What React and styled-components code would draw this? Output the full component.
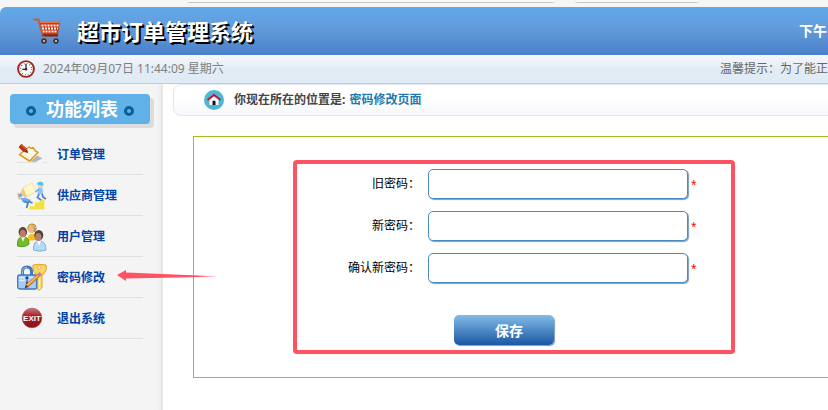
import React, { useState } from "react";
import styled, { createGlobalStyle } from "styled-components";

const fields = [
  { id: "oldpassword", label: "旧密码：" },
  { id: "newpassword", label: "新密码：" },
  { id: "rnewpassword", label: "确认新密码：" },
];

const menu = [
  { text: "订单管理", icon: <OrderIcon /> },
  { text: "供应商管理", icon: <SupplierIcon /> },
  { text: "用户管理", icon: <UsersIcon /> },
  { text: "密码修改", icon: <PasswordIcon />, marked: true },
  { text: "退出系统", icon: <ExitIcon /> },
];

function App() {
  const [values, setValues] = useState({});

  return (
    <Page>
      <GlobalStyle />
      <TabStrip>
        <TabEdge $width="368px" />
        <TabEdge $width="124px" />
      </TabStrip>
      <Header>
        <CartIcon />
        <Title>超市订单管理系统</Title>
        <Greeting>下午</Greeting>
      </Header>
      <TimeBar>
        <ClockIcon />
        <span>2024年09月07日 11:44:09 星期六</span>
        <Tip>温馨提示：为了能正</Tip>
      </TimeBar>
      <Body>
        <Sidebar>
          <MenuTitle>
            <Ring />
            <span>功能列表</span>
            <Ring />
          </MenuTitle>
          <nav>
            <Menu>
              {menu.map((item) => (
                <MenuItem key={item.text}>
                  <MenuLink href="#">
                    {item.icon}
                    {item.text}
                  </MenuLink>
                  {item.marked && <Arrow />}
                </MenuItem>
              ))}
            </Menu>
          </nav>
        </Sidebar>
        <Main>
          <Location>
            <HomeIcon />
            <strong>你现在所在的位置是:</strong>
            <Current>密码修改页面</Current>
          </Location>
          <Panel>
            <Form onSubmit={(e) => e.preventDefault()}>
              {fields.map((f) => (
                <Row key={f.id}>
                  <Label htmlFor={f.id}>{f.label}</Label>
                  <Input
                    id={f.id}
                    type="password"
                    value={values[f.id] || ""}
                    onChange={(e) => setValues({ ...values, [f.id]: e.target.value })}
                  />
                  <Required>*</Required>
                </Row>
              ))}
              <SaveButton type="submit">保存</SaveButton>
            </Form>
          </Panel>
        </Main>
      </Body>
    </Page>
  );
}

export default App;

function CartIcon() {
  return (
    <svg width="28" height="28" viewBox="0 0 28 28" fill="none" aria-hidden="true">
      <path d="M6 4H27L25 18H9.5Z" fill="#c5391a" />
      <path d="M6.5 5H26.5" stroke="#ee7342" strokeWidth="2" />
      <path d="M8.5 8.5H25.5M9 11.5H25M9.5 14.5H24.5" stroke="#fff0e2" strokeWidth="2" strokeDasharray="2 1" />
      <path d="M1.5 2.5H5.5L9.5 18.5" stroke="#b5614a" strokeWidth="2" strokeLinecap="round" />
      <path d="M9.5 18.5H25" stroke="#8e1d08" strokeWidth="2" />
      <path d="M11 19L9 22.5H23" stroke="#8b8890" strokeWidth="1.4" />
      <circle cx="11" cy="24" r="2.8" fill="#3b3538" />
      <circle cx="11" cy="24" r="1.1" fill="#d0d0d0" />
      <circle cx="23" cy="24" r="2.8" fill="#3b3538" />
      <circle cx="23" cy="24" r="1.1" fill="#d0d0d0" />
    </svg>
  );
}

function ClockIcon() {
  return (
    <svg width="18" height="18" viewBox="0 0 18 18" fill="none" aria-hidden="true">
      <circle cx="9" cy="9" r="7.9" fill="#fff" stroke="#a32418" strokeWidth="1.9" />
      <circle cx="9" cy="9" r="5.6" stroke="#555" strokeWidth="1.3" strokeDasharray="0.8 2.13" />
      <path d="M9 4V9.3H5.3" stroke="#222" strokeWidth="1.3" />
      <circle cx="9" cy="9.2" r="1.2" fill="#222" />
    </svg>
  );
}

function HomeIcon() {
  return (
    <svg width="20" height="20" viewBox="0 0 20 20" fill="none" aria-hidden="true">
      <circle cx="10" cy="10" r="10" fill="#50b6d6" />
      <path d="M5.5 9.5L10 6L14.5 9.5V15H5.5Z" fill="#fff" />
      <path d="M3.5 10L10 5L16.5 10" stroke="#c4122f" strokeWidth="1.8" />
      <path d="M8.5 15V11.5Q10 9.5 11.5 11.5V15Z" fill="#111" />
    </svg>
  );
}

function OrderIcon() {
  return (
    <svg width="30" height="30" viewBox="0 0 30 30" fill="none" aria-hidden="true">
      <path d="M13 21.5L20 15.5L25.5 18.5L18 22Z" fill="#b5b5b5" />
      <path d="M0 22.5H20M26 22.5H30" stroke="#e2e2e2" />
      <path d="M2.5 14.5L8 10L12 7L14 8.5L16 7.5L18.5 11L21 12.5L12.5 21Z" fill="#fffaf0" stroke="#e09a17" strokeWidth="1.5" strokeLinejoin="round" />
      <path d="M8 15L12 18M11 12.5L15 15.5" stroke="#f3e6c4" />
      <path d="M3 5.5L8.5 10.5" stroke="#b52a10" strokeWidth="4.4" />
      <path d="M4 4.5L8.8 8.8" stroke="#ef5a2c" strokeWidth="1.5" />
      <path d="M7.2 12L10.2 9.2L11 13Z" fill="#5b2b11" />
    </svg>
  );
}

function SupplierIcon() {
  return (
    <svg width="30" height="30" viewBox="0 0 30 30" fill="none" aria-hidden="true">
      <path d="M12 28.5V25H17.5V21H22.5V18H27.5V28.5Z" fill="#f3e144" />
      <path d="M12 28.5V25H17.5V21H22.5V18H27.5" stroke="#fff6a0" />
      <path d="M6 7L15 2L19.5 10L10 16Z" fill="#fff8c9" stroke="#f0e2a0" />
      <path d="M6 7L3 12.5L8 17L10 16Z" fill="#f7c58c" />
      <path d="M21 7L25.5 7L26 13L20.5 13.5Z" fill="#8cc6f5" />
      <path d="M22 8L18.5 11" stroke="#6aa5e8" strokeWidth="1.6" />
      <path d="M22 13L20.5 16.5L24 19M25 13L26 16L29 18" stroke="#4d82d0" strokeWidth="1.8" />
      <circle cx="23.5" cy="4.5" r="2.5" fill="#f6c8a0" />
      <path d="M19.5 3.6Q20.5 .5 23.5 .7Q27 1 26.5 4.6Z" fill="#4fc3e6" />
      <circle cx="3" cy="14.5" r="2.1" fill="#4fbbe4" />
      <path d="M3 17L9 17L14 19L11 22L6 21Z" fill="#77aeea" />
      <path d="M6 20L11 22L9.5 27M11 20L15.5 22" stroke="#4d82d0" strokeWidth="1.8" />
      <path d="M1 12L2.5 18.5" stroke="#f0a48c" strokeWidth="1.2" />
    </svg>
  );
}

function UsersIcon() {
  return (
    <svg width="30" height="30" viewBox="0 0 30 30" fill="none" aria-hidden="true">
      <path d="M10 19Q11 11 15 12Q20 11 20 18Z" fill="#f4bf21" />
      <circle cx="15" cy="6" r="4.6" fill="#b98c3d" />
      <ellipse cx="14.2" cy="7.5" rx="2.9" ry="3.6" fill="#e8b98a" />
      <path d="M11 5Q15 1 19 6" stroke="#e3b85d" strokeWidth="1.5" />
      <path d="M.5 24Q0 15 5 15Q12 14 12 22Q8 26 .5 24Z" fill="#72bd26" stroke="#5b9a20" />
      <path d="M4 15L6 20L8 15Z" fill="#e9f7d5" />
      <ellipse cx="5.8" cy="10" rx="4.2" ry="5" fill="#5c4337" />
      <ellipse cx="5.8" cy="11.5" rx="2.9" ry="3.8" fill="#ba8067" />
      <path d="M16.5 28Q16 19 22 19Q29 19 29 28Q23 30.5 16.5 28Z" fill="#b4dcfa" stroke="#7fb1df" />
      <path d="M20 19L22 24L24 19Z" fill="#fff" />
      <ellipse cx="21.8" cy="13.2" rx="4.5" ry="5.2" fill="#54403a" />
      <ellipse cx="21.3" cy="15" rx="3.2" ry="4" fill="#b97f69" />
    </svg>
  );
}

function PasswordIcon() {
  return (
    <svg width="30" height="30" viewBox="0 0 30 30" fill="none" aria-hidden="true">
      <path d="M16 2Q22 .5 29 2Q30.5 9 25 12V24.5L22 27.5L20 25V12Q15 9 16 2Z" fill="#f9d566" stroke="#dda52b" />
      <path d="M22.5 11V26" stroke="#fff0ae" strokeWidth="1.5" />
      <circle cx="22.5" cy="4.5" r="1.5" fill="#fff" stroke="#cb982d" strokeWidth=".7" />
      <path d="M5.5 13V8.5Q5.5 4 10 4Q14.5 4 14.5 8.5V13" stroke="#4479bb" strokeWidth="3" />
      <path d="M5.5 12V8.5Q5.5 4.5 10 4.5" stroke="#9dc6ed" />
      <rect x=".7" y="12" width="19" height="14" rx="2" fill="#a5ccf5" stroke="#3e76bc" strokeWidth="1.3" />
      <path d="M2 14.5H18.5M2 17.5H8" stroke="#d8ebfd" strokeWidth="1.3" />
      <path d="M9.8 16.5A1.6 1.6 0 1 1 10.2 16.5L11 21H9Z" fill="#173e7d" />
      <path d="M10 23L22.5 11.5" stroke="#b46f2b" strokeWidth="3.6" />
      <path d="M10 22.6L22 11.8" stroke="#f8b557" strokeWidth="2" />
      <path d="M21.2 12.6L23.8 10.2" stroke="#cf78a5" strokeWidth="3.6" />
      <path d="M7.5 25.5L9 21.5L11.5 24Z" fill="#4c3b2c" />
    </svg>
  );
}

function ExitIcon() {
  return (
    <svg width="30" height="30" viewBox="0 0 30 30" fill="none" aria-hidden="true">
      <defs>
        <linearGradient id="exit" x1="0" y1="0" x2="0" y2="1">
          <stop offset="0" stopColor="#cf7c7c" />
          <stop offset=".4" stopColor="#a51d22" />
          <stop offset="1" stopColor="#8d1217" />
        </linearGradient>
      </defs>
      <circle cx="15" cy="14" r="9.8" fill="url(#exit)" stroke="#8a3a3c" strokeWidth=".6" />
      <text x="15" y="16.8" textAnchor="middle" fontFamily="Liberation Sans Narrow, Liberation Sans, sans-serif" fontSize="8" fontWeight="bold" fill="#fff">
        EXIT
      </text>
    </svg>
  );
}

function Arrow() {
  return (
    <ArrowSvg width="102" height="12" viewBox="0 0 102 12" aria-hidden="true">
      <defs>
        <linearGradient id="arrow">
          <stop offset=".8" stopColor="#ff5263" />
          <stop offset="1" stopColor="#ff5263" stopOpacity=".2" />
        </linearGradient>
      </defs>
      <path d="M0 5L9 0V2.5L100 6.3V6.8L9 8.5V11Z" fill="url(#arrow)" />
    </ArrowSvg>
  );
}

const GlobalStyle = createGlobalStyle`
  * {
    box-sizing: border-box;
  }
  body {
    margin: 0;
    background: #fff;
    font-family: "Noto Sans", "Noto Sans CJK SC", sans-serif;
    font-size: 12px;
    line-height: 20px;
    color: #000;
  }
  svg {
    flex-shrink: 0;
  }
`;
const Page = styled.div`
  display: flex;
  flex-direction: column;
  min-height: 100vh;
  overflow: hidden;
`;
const TabStrip = styled.div`
  display: flex;
  gap: 20px;
  height: 7px;
  padding-left: 187px;
  background: #f6f6f6;
`;
const TabEdge = styled.div`
  width: ${(props) => props.$width};
  height: 3px;
  border-bottom: 1px solid #c6c6c6;
  border-radius: 0 0 12px 12px;
  background: #fafafa;
`;
const Header = styled.header`
  display: flex;
  align-items: center;
  gap: 16px;
  height: 48px;
  padding: 0 1px 0 33px;
  border-top-left-radius: 6px;
  background: linear-gradient(#63a9ea, #629bda 45%, #4a80c8);
  color: #fff;
`;
const Title = styled.h1`
  margin: 0;
  font-size: 22px;
  line-height: 32px;
  text-shadow: 1px 1px 0 #000, 2px 2px 0 #000;
  white-space: nowrap;
`;
const Greeting = styled.span`
  margin-left: auto;
  font-size: 14px;
  font-weight: bold;
  white-space: nowrap;
`;
const TimeBar = styled.div`
  display: flex;
  align-items: center;
  gap: 8px;
  height: 29px;
  padding-left: 17px;
  border-bottom: 1px solid #bccbda;
  background: linear-gradient(#f6f8fd, #e2ecf5 50%, #dfebf5);
  color: #808080;
  white-space: nowrap;
`;
const Tip = styled.span`
  margin-left: auto;
  color: #666;
`;
const Body = styled.div`
  display: flex;
  flex: 1;
`;
const Sidebar = styled.aside`
  position: relative;
  z-index: 1;
  flex: 0 0 163px;
  padding: 10px 8px 0 10px;
  border-right: 2px solid #e7e7e4;
  background: linear-gradient(to left, #ebebeb, #f4f4f4 4px);
`;
const MenuTitle = styled.h2`
  display: flex;
  align-items: center;
  justify-content: space-between;
  width: 140px;
  height: 30px;
  margin: 0 0 10px;
  padding: 0 16px;
  border-radius: 4px;
  background: #60b1e7;
  box-shadow: 4px 4px 0 #dcdcdc;
  font-size: 18px;
  color: #fff;
  span {
    padding-left: 4px;
  }
`;
const Ring = styled.i`
  width: 10px;
  height: 10px;
  margin-top: 4px;
  border: 3px solid #0b6098;
  border-radius: 50%;
`;
const Menu = styled.ul`
  width: 126px;
  margin: 0 0 0 7px;
  padding: 0;
  list-style: none;
`;
const MenuItem = styled.li`
  position: relative;
  border-bottom: 1px solid #e2e2e2;
`;
const MenuLink = styled.a`
  display: flex;
  align-items: center;
  gap: 10px;
  height: 40px;
  padding-top: 2px;
  font-weight: bold;
  color: #0042a5;
  text-decoration: none;
  white-space: nowrap;
`;
const ArrowSvg = styled.svg`
  position: absolute;
  left: 100px;
  top: 13px;
`;
const Main = styled.main`
  flex: 1;
  min-width: 0;
  padding-left: 10px;
`;
const Location = styled.div`
  display: flex;
  align-items: center;
  height: 32px;
  margin-right: -10px;
  padding-left: 30px;
  border: 1px solid #e3e5f0;
  border-radius: 8px;
  background: linear-gradient(#fff 40%, #f7f8fc);
  white-space: nowrap;
  strong {
    margin: 0 4px 0 10px;
    color: #444;
  }
`;
const Current = styled.span`
  font-weight: bold;
  color: #2379ab;
`;
const Panel = styled.section`
  margin: 20px -10px 32px 20px;
  padding: 23px 99px;
  border: 1px solid #9bc01c;
`;
const Form = styled.form`
  width: 442px;
  padding: 5px 0;
  border: 4px solid #ff5263;
  border-radius: 4px;
`;
const Row = styled.div`
  display: grid;
  grid-template-columns: 123px 260px auto;
  align-items: center;
  margin-bottom: 12px;
  column-gap: 8px;
`;
const Label = styled.label`
  text-align: right;
  white-space: nowrap;
`;
const Input = styled.input`
  width: 100%;
  height: 30px;
  padding: 0 10px;
  border: 1px solid #4a8ac2;
  border-radius: 5px;
  box-shadow: 1px 1px 1px #7a9dbd;
  background: #fff;
  outline: none;
`;
const Required = styled.span`
  margin-left: -5px;
  font-size: 10px;
  color: #f00;
`;
const SaveButton = styled.button`
  display: block;
  width: 100px;
  height: 30px;
  margin: 32px 0 0 157px;
  padding: 0 0 0 10px;
  border: none;
  border-radius: 5px;
  background: linear-gradient(#82bce8, #1b57a3);
  box-shadow: 1px 1px 1px #7a9dbd;
  font-family: inherit;
  font-size: 14px;
  font-weight: bold;
  color: #fff;
  cursor: pointer;
`;
